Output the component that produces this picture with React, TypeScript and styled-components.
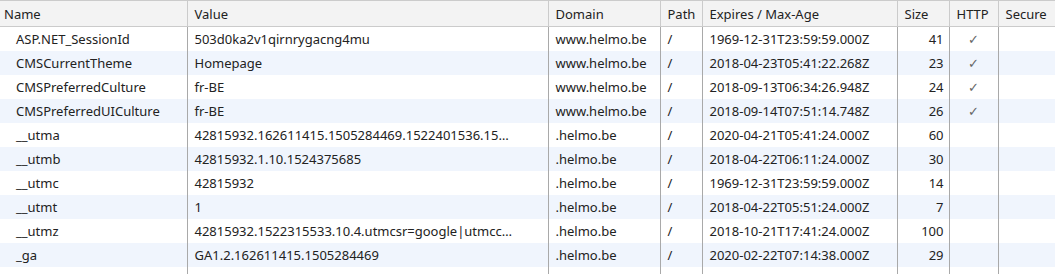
import React, { FC } from 'react';
import styled, { createGlobalStyle } from 'styled-components';

const GlobalStyle = createGlobalStyle`
  html, body {
    margin: 0;
    padding: 0;
    background: #fff;
  }
  body {
    font-family: 'Segoe UI', 'Noto Sans', sans-serif;
    font-size: 13px;
    color: #222;
  }
`;

const Grid = styled.table`
  width: 1055px;
  height: 274px;
  table-layout: fixed;
  border-collapse: collapse;
  border-top: solid 1px #cbcbcb;
`;

const HeadCell = styled.th<{ first?: boolean }>`
  height: 25px;
  padding: 0 0 0 ${({ first }) => (first ? '4px' : '7px')};
  background: #f3f3f3;
  border-bottom: solid 1px #cbcbcb;
  border-left: ${({ first }) => (first ? 'none' : 'solid 1px #cbcbcb')};
  text-align: left;
  font-weight: normal;
  white-space: nowrap;
`;

const Row = styled.tr<{ odd: boolean }>`
  background: ${({ odd }) => (odd ? '#f0f5fd' : '#fff')};
`;

const Cell = styled.td<{ align?: 'left' | 'right' | 'center'; first?: boolean }>`
  height: 24px;
  padding: 0 ${({ align }) => (align === 'right' ? '5px' : '0')} 0
    ${({ first, align }) => (first ? '16px' : align === 'left' || !align ? '7px' : '0')};
  border-left: ${({ first }) => (first ? 'none' : 'solid 1px #a9a9a9')};
  text-align: ${({ align }) => align || 'left'};
  white-space: nowrap;
`;

const Check = styled.span`
  color: #666;
  font-size: 13px;
`;

const Filler = styled.td<{ first?: boolean }>`
  padding: 0;
  border-left: ${({ first }) => (first ? 'none' : 'solid 1px #a9a9a9')};
`;

const widths = [187, 361, 112, 42, 195, 52, 49, 57];
const headers = ['Name', 'Value', 'Domain', 'Path', 'Expires / Max-Age', 'Size', 'HTTP', 'Secure'];

type Cookie = {
  name: string;
  value: string;
  domain: string;
  expires: string;
  size: number;
  http: boolean;
};

const cookies: Cookie[] = [
  { name: 'ASP.NET_SessionId', value: '503d0ka2v1qirnrygacng4mu', domain: 'www.helmo.be', expires: '1969-12-31T23:59:59.000Z', size: 41, http: true },
  { name: 'CMSCurrentTheme', value: 'Homepage', domain: 'www.helmo.be', expires: '2018-04-23T05:41:22.268Z', size: 23, http: true },
  { name: 'CMSPreferredCulture', value: 'fr-BE', domain: 'www.helmo.be', expires: '2018-09-13T06:34:26.948Z', size: 24, http: true },
  { name: 'CMSPreferredUICulture', value: 'fr-BE', domain: 'www.helmo.be', expires: '2018-09-14T07:51:14.748Z', size: 26, http: true },
  { name: '__utma', value: '42815932.162611415.1505284469.1522401536.15…', domain: '.helmo.be', expires: '2020-04-21T05:41:24.000Z', size: 60, http: false },
  { name: '__utmb', value: '42815932.1.10.1524375685', domain: '.helmo.be', expires: '2018-04-22T06:11:24.000Z', size: 30, http: false },
  { name: '__utmc', value: '42815932', domain: '.helmo.be', expires: '1969-12-31T23:59:59.000Z', size: 14, http: false },
  { name: '__utmt', value: '1', domain: '.helmo.be', expires: '2018-04-22T05:51:24.000Z', size: 7, http: false },
  { name: '__utmz', value: '42815932.1522315533.10.4.utmcsr=google|utmcc…', domain: '.helmo.be', expires: '2018-10-21T17:41:24.000Z', size: 100, http: false },
  { name: '_ga', value: 'GA1.2.162611415.1505284469', domain: '.helmo.be', expires: '2020-02-22T07:14:38.000Z', size: 29, http: false },
];

const App: FC = () => (
  <>
    <GlobalStyle />
    <Grid>
      <colgroup>
        {widths.map((w, i) => (
          <col key={i} style={{ width: w }} />
        ))}
      </colgroup>
      <thead>
        <tr>
          {headers.map((h, i) => (
            <HeadCell key={h} first={i === 0}>
              {h}
            </HeadCell>
          ))}
        </tr>
      </thead>
      <tbody>
        {cookies.map((c, i) => (
          <Row key={c.name} odd={i % 2 === 1}>
            <Cell first>{c.name}</Cell>
            <Cell>{c.value}</Cell>
            <Cell>{c.domain}</Cell>
            <Cell>/</Cell>
            <Cell>{c.expires}</Cell>
            <Cell align="right">{c.size}</Cell>
            <Cell align="center">{c.http && <Check>✓</Check>}</Cell>
            <Cell />
          </Row>
        ))}
        <tr>
          {widths.map((_, i) => (
            <Filler key={i} first={i === 0} />
          ))}
        </tr>
      </tbody>
    </Grid>
  </>
);

export default App;
